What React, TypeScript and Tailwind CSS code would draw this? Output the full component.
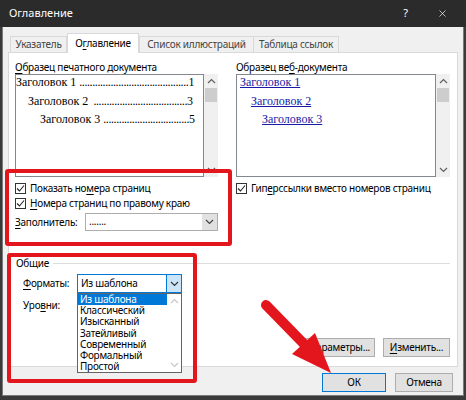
import React from 'react';
import { X } from 'lucide-react';

// Word "Table of Contents" dialog with red annotation frames

const ui = "font-['Noto_Sans',sans-serif]";
const serif = "font-['Liberation_Serif',serif]";

function U({ children }: { children: React.ReactNode }) {
  return <span className="underline underline-offset-[2px] decoration-[1px]">{children}</span>;
}

function Chevron({ dir, className }: { dir: 'up' | 'down'; className?: string }) {
  return (
    <svg width="9" height="6" viewBox="0 0 9 6" className={className}>
      <polyline
        points={dir === 'up' ? '1,5 4.5,1.5 8,5' : '1,1 4.5,4.5 8,1'}
        fill="none"
        stroke="currentColor"
        strokeWidth="1.2"
      />
    </svg>
  );
}

function Checkbox() {
  return (
    <div className="w-[11px] h-[11px] border border-[#333] bg-white flex items-center justify-center shrink-0">
      <svg width="9" height="9" viewBox="0 0 9 9">
        <polyline points="1,4.5 3.5,7 8,1.5" fill="none" stroke="#222" strokeWidth="1.1" />
      </svg>
    </div>
  );
}

function Scrollbar() {
  return (
    <div className="w-[14px] flex flex-col bg-[#f0f0f0] text-[#606060]">
      <div className="h-[14px] flex items-center justify-center">
        <Chevron dir="up" />
      </div>
      <div className="h-[14px] mx-[1px] bg-[#cdcdcd]" />
      <div className="flex-1" />
      <div className="h-[14px] flex items-center justify-center">
        <Chevron dir="down" />
      </div>
    </div>
  );
}

function TocRow({ title, page, dots, indent }: { title: string; page: string; dots: number; indent: string }) {
  return (
    <div className={`flex h-[14px] leading-[14px] whitespace-nowrap ${indent}`}>
      <span>{title}&nbsp;</span>
      <span className="ml-auto tracking-[-0.4px]">{'.'.repeat(dots)}</span>
      <span>{page}</span>
    </div>
  );
}

function Button({ children, w, primary }: { children: React.ReactNode; w: string; primary?: boolean }) {
  return (
    <div
      className={`${w} h-[19px] flex items-center justify-center bg-[#e1e1e1] border ${
        primary ? 'border-[#0078d7]' : 'border-[#adadad]'
      }`}
    >
      {children}
    </div>
  );
}

const formats = ['Из шаблона', 'Классический', 'Изысканный', 'Затейливый', 'Современный', 'Формальный', 'Простой'];

export default function App() {
  return (
    <div className={`relative w-[466px] h-[400px] overflow-hidden bg-[#2b2b2b] flex flex-col ${ui} text-[10px] text-black`}>
      {/* Title bar */}
      <div className="h-[27px] flex items-center pl-[9px] pr-[18px] text-white text-[11px]">
        <span>Оглавление</span>
        <span className="ml-auto">?</span>
        <X className="ml-[29px] w-[11px] h-[11px]" strokeWidth={1.5} />
      </div>

      <div className="flex-1 flex px-[2px] pb-[4px] bg-[#3a3a3a] tracking-[-0.25px]">
        <div className="flex-1 flex flex-col bg-[#f0f0f0] border-x border-b border-[#7a7a7a] px-[5px] pt-[6px]">
          {/* Tabs */}
          <div className="flex items-end h-[19px] pl-[2px] text-[#444]">
            <div className="w-[57px] h-[16px] flex items-center justify-center border border-b-0 border-[#d9d9d9]">
              Указатель
            </div>
            <div className="relative z-10 -mb-px w-[72px] h-[20px] flex items-center justify-center bg-white border border-b-0 border-[#d9d9d9] text-black">
              <span>
                О<U>г</U>лавление
              </span>
            </div>
            <div className="w-[115px] h-[16px] flex items-center justify-center border border-b-0 border-[#d9d9d9]">
              Список иллюстраций
            </div>
            <div className="w-[85px] h-[16px] flex items-center justify-center border border-b-0 border-l-0 border-[#d9d9d9]">
              Таблица ссылок
            </div>
          </div>

          {/* Tab panel */}
          <div className="h-[315px] flex flex-col bg-white border border-[#d9d9d9] pl-[6px] pr-[7px] pt-[8px]">
            <div className="flex gap-[18px]">
              {/* Print preview */}
              <div className="w-[203px] flex flex-col">
                <div className="h-[13px] leading-[13px]">
                  <U>О</U>бразец печатного документа
                </div>
                <div className="flex h-[103px]">
                  <div className={`w-[189px] border border-[#828790] flex flex-col gap-[4.5px] pr-[10px] text-[12px] tracking-normal ${serif}`}>
                    <TocRow title="Заголовок 1" page="1" dots={42} indent="pl-[0px]" />
                    <TocRow title="Заголовок 2" page="3" dots={36} indent="pl-[12px]" />
                    <TocRow title="Заголовок 3" page="5" dots={33} indent="pl-[24px]" />
                  </div>
                  <Scrollbar />
                </div>
                <div className="mt-[5px] h-[13px] flex items-center gap-[4px]">
                  <Checkbox />
                  <span>
                    Показать но<U>м</U>ера страниц
                  </span>
                </div>
                <div className="mt-[2px] h-[13px] flex items-center gap-[4px]">
                  <Checkbox />
                  <span>
                    <U>Н</U>омера страниц по правому краю
                  </span>
                </div>
                <div className="mt-[3px] h-[18px] flex items-center">
                  <span className="w-[70px]">
                    <U>З</U>аполнитель:
                  </span>
                  <div className="w-[133px] h-[18px] flex border border-[#adadad] bg-white">
                    <span className="flex-1 pl-[3px] leading-[14px]">.......</span>
                    <div className="w-[15px] bg-[#e1e1e1] flex items-center justify-center text-[#444]">
                      <Chevron dir="down" />
                    </div>
                  </div>
                </div>
              </div>

              {/* Web preview */}
              <div className="w-[214px] flex flex-col">
                <div className="h-[13px] leading-[13px]">
                  Образец ве<U>б</U>-документа
                </div>
                <div className="flex h-[103px]">
                  <div className={`w-[200px] border border-[#828790] flex flex-col gap-[4.5px] pl-[3px] text-[12px] tracking-normal text-[#1a1aa6] ${serif}`}>
                    <span className="h-[14px] leading-[14px] underline">Заголовок 1</span>
                    <span className="h-[14px] leading-[14px] underline pl-[11px]">Заголовок 2</span>
                    <span className="h-[14px] leading-[14px] underline pl-[22px]">Заголовок 3</span>
                  </div>
                  <Scrollbar />
                </div>
                <div className="mt-[5px] h-[13px] flex items-center gap-[4px]">
                  <Checkbox />
                  <span>
                    Гип<U>е</U>рссылки вместо номеров страниц
                  </span>
                </div>
              </div>
            </div>

            {/* General group */}
            <div className="mt-[26px] h-[12px] flex items-center">
              <span className="pl-[1px]">Общие</span>
              <div className="flex-1 h-px bg-[#dcdcdc] ml-[4px]" />
            </div>
            <div className="mt-[5px] h-[19px] flex items-center pl-[8px]">
              <span className="w-[54px]">
                <U>Ф</U>орматы:
              </span>
              <div className="w-[105px] h-[19px] flex border border-[#0078d7] bg-white">
                <span className="flex-1 pl-[3px] leading-[17px]">Из шаблона</span>
                <div className="w-[15px] bg-[#cce4f7] border-l border-[#0078d7] flex items-center justify-center text-[#333]">
                  <Chevron dir="down" />
                </div>
              </div>
            </div>
            <div className="mt-[3px] h-[19px] flex items-center pl-[8px]">
              <span>
                Уро<U>в</U>ни:
              </span>
            </div>

            <div className="mt-[23px] flex justify-end gap-[8px]">
              <Button w="w-[71px]">
                <span>
                  <U>П</U>араметры...
                </span>
              </Button>
              <Button w="w-[67px]">
                <span>
                  <U>И</U>зменить...
                </span>
              </Button>
            </div>
          </div>

          {/* Footer */}
          <div className="mt-[6px] flex justify-end gap-[9px] pr-[5px]">
            <Button w="w-[64px]" primary>
              ОК
            </Button>
            <Button w="w-[58px]">Отмена</Button>
          </div>
        </div>
      </div>

      {/* Open formats dropdown */}
      <div className="absolute left-[77px] top-[293px] w-[105px] h-[80px] flex border border-[#646464] bg-white overflow-hidden tracking-[-0.25px]">
        <div className="flex-1 flex flex-col">
          {formats.map((f, i) => (
            <div
              key={f}
              className={`h-[11.2px] leading-[11.2px] pl-[2px] shrink-0 ${i === 0 ? 'bg-[#0078d7] text-white' : ''}`}
            >
              {f}
            </div>
          ))}
        </div>
        <div className="w-[14px] flex flex-col justify-between py-[4px] items-center text-[#c8c8c8]">
          <Chevron dir="up" />
          <Chevron dir="down" />
        </div>
      </div>

      {/* Red annotation frames */}
      <div className="absolute left-[5px] top-[169px] w-[227px] h-[77px] border-[4px] border-[#e3161d] rounded-[3px]" />
      <div className="absolute left-[7px] top-[253px] w-[190px] h-[130px] border-[4px] border-[#e3161d] rounded-[3px]" />

      {/* Red arrow */}
      <svg className="absolute inset-0 pointer-events-none" width="466" height="400" viewBox="0 0 466 400">
        <line x1="266" y1="305" x2="305" y2="345" stroke="#e3161d" strokeWidth="10" strokeLinecap="round" />
        <polygon points="292,354 315,333 331,373" fill="#e3161d" />
      </svg>
    </div>
  );
}
